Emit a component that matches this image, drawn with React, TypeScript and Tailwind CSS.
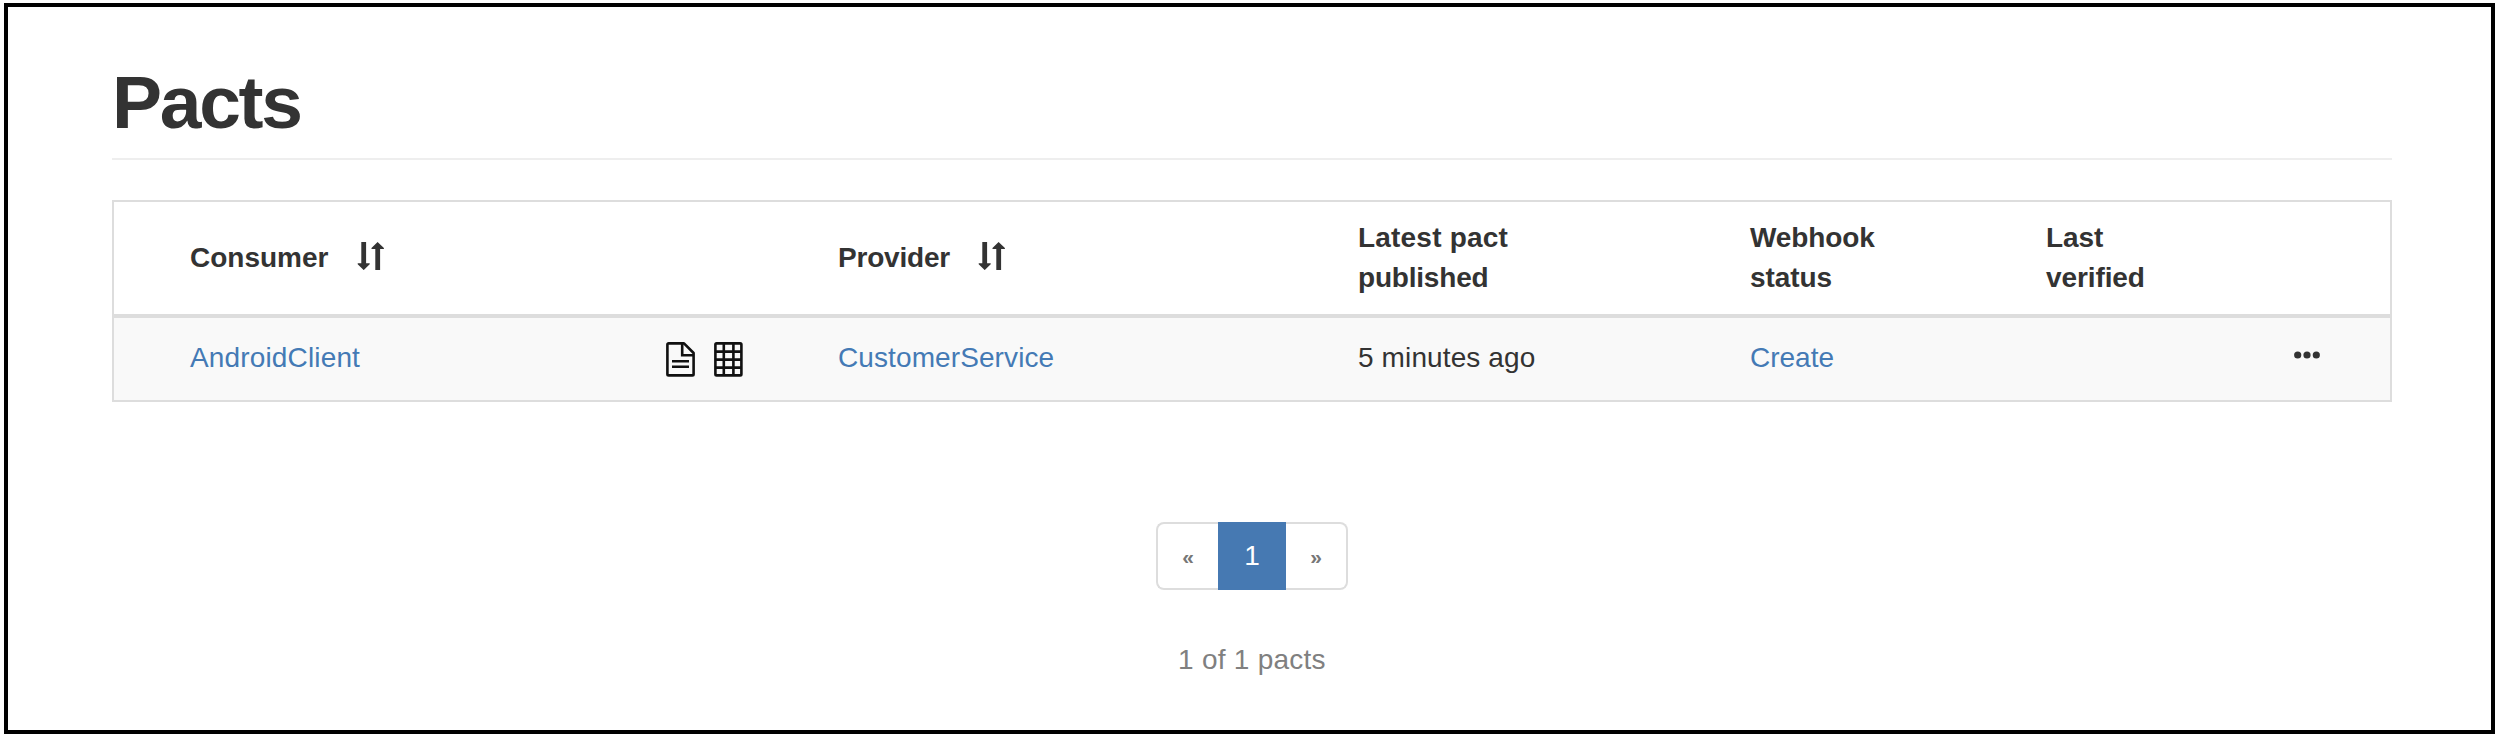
import React from "react";

const columns =
  "grid grid-cols-[648px_520px_392px_296px_348px] pl-[76px]";

function SortIcon() {
  return (
    <svg width="28" height="28" viewBox="0 0 28 28" fill="currentColor" className="-mt-1 shrink-0">
      <path d="M4.3 0h4.8v21.2h3.6v1L6.7 28.1.7 22.2v-1h3.6z" />
      <path d="M20.6 0l6.3 5.9v1h-3.8V28h-4.8V6.9h-3.8v-1z" />
    </svg>
  );
}

function DocumentIcon() {
  return (
    <svg width="29" height="35" viewBox="0 0 29 35" fill="none" stroke="#111" strokeWidth="2.6" strokeLinejoin="round">
      <path d="M2.6 1.4H18L27.6 11V32.2a1.2 1.2 0 0 1-1.2 1.2H2.6a1.2 1.2 0 0 1-1.2-1.2V2.6a1.2 1.2 0 0 1 1.2-1.2z" />
      <path d="M16.2 1.6V13.2H27.4" strokeLinejoin="miter" />
      <path d="M6 19.2h17M6 24.8h17" />
    </svg>
  );
}

function GridIcon() {
  return (
    <svg width="29" height="35" viewBox="0 0 29 35" fill="none" stroke="#111" strokeWidth="2.6">
      <rect x="1.4" y="1.4" width="26" height="32" rx="1.2" />
      <path d="M9.8 1.4v32M19.4 1.4v32M1.4 9.6h26M1.4 17.6h26M1.4 25.6h26" />
    </svg>
  );
}

export default function App() {
  return (
    <div className="h-[738px] w-[2498px] bg-white pt-[3px] pl-1 font-['Liberation_Sans',Arial,sans-serif] text-[28px] leading-10 text-[#333]">
      <main className="flex h-[731px] w-[2491px] flex-col border-4 border-black pl-[104px]">
        <header className="h-[153px] w-[2280px] border-b-2 border-[#eee] pt-[55px]">
          <h1 className="text-[75px] leading-[80px] font-bold tracking-[-2.3px]">Pacts</h1>
        </header>

        <section className="mt-10 w-[2280px] border-2 border-[#ddd]">
          <div className={columns + " h-[112px] items-center font-bold"}>
            <div className="flex items-center">
              <span className="w-[167px]">Consumer</span>
              <SortIcon />
            </div>
            <div className="flex items-center">
              <span className="w-[140px] tracking-[-0.2px]">Provider</span>
              <SortIcon />
            </div>
            <div>
              <span className="block tracking-[0.2px]">Latest pact</span>
              <span className="block tracking-[-0.2px]">published</span>
            </div>
            <div className="tracking-[-0.1px]">Webhook<br />status</div>
            <div className="tracking-[-0.1px]">Last<br />verified</div>
          </div>
          <div className={columns + " h-[86px] items-center border-t-4 border-[#ddd] bg-[#f9f9f9] pb-0.5"}>
            <div className="flex items-center">
              <a className="w-[476px] tracking-[0.15px] text-[#447ab5]">AndroidClient</a>
              <div className="mt-[3px] flex gap-[19px]">
                <DocumentIcon />
                <GridIcon />
              </div>
            </div>
            <a className="tracking-[0.1px] text-[#447ab5]">CustomerService</a>
            <div className="tracking-[0.12px]">5 minutes ago</div>
            <a className="text-[#447ab5]">Create</a>
            <div className="flex pl-[247px]">
              <svg width="28" height="10" viewBox="0 0 28 10" fill="#333" className="-mt-[7px]">
                <circle cx="4.7" cy="5" r="3.6" />
                <circle cx="14" cy="5" r="3.6" />
                <circle cx="23.3" cy="5" r="3.6" />
              </svg>
            </div>
          </div>
        </section>

        <footer className="mt-[120px] flex w-[2280px] flex-col items-center">
          <nav className="flex h-[68px] w-[192px] text-center">
            <span className="w-[62px] rounded-l-lg border-2 border-r-0 border-[#ddd] pt-[13px] text-[21px] font-bold text-[#777]">«</span>
            <span className="w-[68px] bg-[#4679b2] pt-3.5 text-white">1</span>
            <span className="w-[62px] rounded-r-lg border-2 border-l-0 border-[#ddd] pt-[13px] text-[21px] font-bold text-[#777]">»</span>
          </nav>
          <p className="mt-[50px] tracking-[0.25px] text-[#808080]">1 of 1 pacts</p>
        </footer>
      </main>
    </div>
  );
}
